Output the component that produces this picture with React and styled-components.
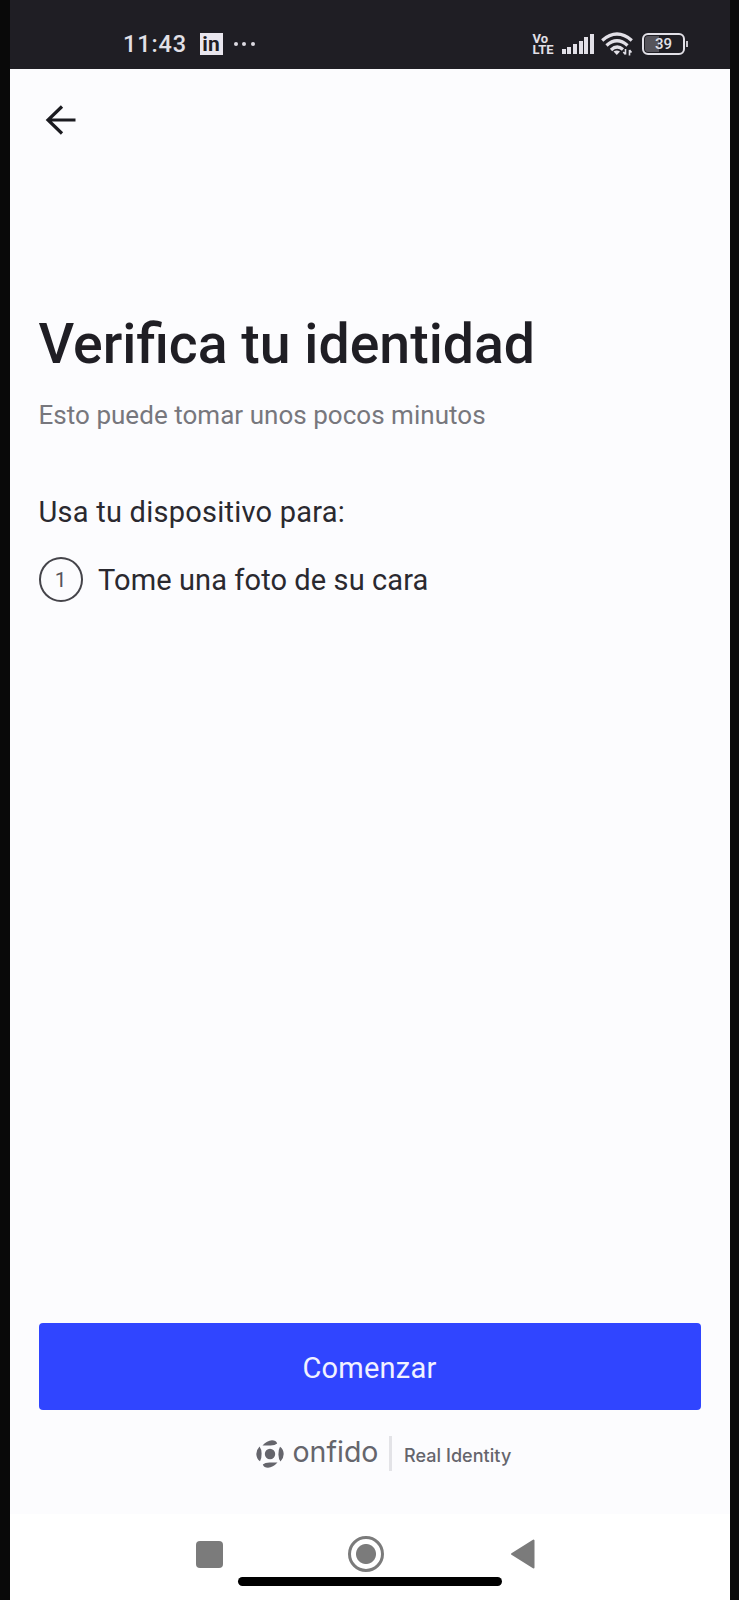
import React from "react";
import styled, { createGlobalStyle } from "styled-components";

const steps = ["Tome una foto de su cara"];

const signalBars = [5, 7, 10, 13.5, 17, 20];

const StatusBar = () => (
  <Status>
    <StatusLeft>
      <Clock>11:43</Clock>
      <LinkedIn>in</LinkedIn>
      <Dots>
        <span />
        <span />
        <span />
      </Dots>
    </StatusLeft>
    <StatusRight>
      <Volte>
        <span>Vo</span>
        <span>LTE</span>
      </Volte>
      <Signal>
        {signalBars.map((height) => (
          <SignalBar key={height} $height={height} />
        ))}
      </Signal>
      <WifiIcon viewBox="0 0 32 24">
        <g fill="none" stroke="#e2e0e7" strokeWidth="3.3">
          <path d="M1.2 8.4Q16-4.4 30.8 8.4" />
          <path d="M5.5 13.4Q16 4 26.5 13.4" />
          <path d="M10 18Q16 12.4 22 17.5" />
        </g>
        <path d="M12.5 19.6Q15.8 17.4 19 19.6L15.8 23z" fill="#e2e0e7" />
        <path
          d="M24.5 17v5.5M22.3 20l2.2 2.4M28.5 23.5v-5.5M28.5 18l2 2.4"
          fill="none"
          stroke="#e2e0e7"
          strokeWidth="1.6"
        />
      </WifiIcon>
      <Battery>
        <BatteryBody>39</BatteryBody>
        <BatteryTip />
      </Battery>
    </StatusRight>
  </Status>
);

const App = () => {
  return (
    <>
      <GlobalStyle />
      <Device>
        <Screen>
          <StatusBar />
          <Toolbar>
            <BackButton aria-label="Atrás">
              <svg width="32" height="30" viewBox="0 0 32 30">
                <path
                  d="M17 1.5 3 15l14 13.5M3 15h27.5"
                  fill="none"
                  stroke="#1b1b20"
                  strokeWidth="3.2"
                />
              </svg>
            </BackButton>
          </Toolbar>

          <Content>
            <Title>Verifica tu identidad</Title>
            <Subtitle>Esto puede tomar unos pocos minutos</Subtitle>
            <Lead>Usa tu dispositivo para:</Lead>
            <Steps>
              {steps.map((step, index) => (
                <Step key={step}>
                  <StepNumber>{index + 1}</StepNumber>
                  <StepText>{step}</StepText>
                </Step>
              ))}
            </Steps>
          </Content>

          <Footer>
            <StartButton>Comenzar</StartButton>
            <Brand>
              <svg width="28" height="28" viewBox="0 0 28 28" fill="#65656c">
                <circle cx="14" cy="14" r="5.2" />
                <path d="M6.5 5.5Q11 .5 16 .3q4 0 5.2 3.2Q19 5.6 14 5.5z" />
                <path d="M21.5 22.5Q17 27.5 12 27.7q-4 0-5.2-3.2Q9 22.4 14 22.5z" />
                <path d="M3.5 6.5Q.3 10 .3 14q.2 5 3.7 7.3Q5.800 18 5.600 13.500 5.500 9 3.500 6.500z" />
                <path d="M24.5 21.5q3.2-3.5 3.2-7.5-.2-5-3.7-7.3Q22.2 10 22.400 14.500q.1 4.500 2.100 7z" />
              </svg>
              <BrandName>onfido</BrandName>
              <Divider />
              <Tagline>Real Identity</Tagline>
            </Brand>
          </Footer>

          <NavBar>
            <NavSquare />
            <NavCircle />
            <svg width="25" height="30" viewBox="0 0 25 30">
              <path
                d="M2 15 23.5 1.5v27z"
                fill="#7b7b7b"
                stroke="#7b7b7b"
                strokeWidth="2"
                strokeLinejoin="round"
              />
            </svg>
            <HomeIndicator />
          </NavBar>
        </Screen>
      </Device>
    </>
  );
};

const GlobalStyle = createGlobalStyle`
  * {
    box-sizing: border-box;
  }

  body {
    margin: 0;
    background: #090909;
    font-family: Roboto, sans-serif;
  }

  svg {
    display: block;
    flex-shrink: 0;
  }
`;

const Device = styled.div`
  height: 1600px;
  padding: 0 9.5px;
  background: #090909;
`;

const Screen = styled.main`
  height: 100%;
  display: flex;
  flex-direction: column;
  background: #fcfcfe;
`;

const Status = styled.header`
  height: 69px;
  display: flex;
  justify-content: space-between;
  align-items: flex-start;
  padding: 32px 41.5px 0 113.5px;
  background: #1f1e24;
  color: #e2e0e7;
`;

const StatusLeft = styled.div`
  height: 24px;
  display: flex;
  align-items: center;
`;

const StatusRight = styled.div`
  height: 24px;
  display: flex;
  align-items: center;
`;

const Clock = styled.span`
  width: 76.5px;
  font-size: 23.5px;
  line-height: 24px;
  font-weight: 500;
  letter-spacing: 0.9px;
`;

const LinkedIn = styled.span`
  width: 23px;
  height: 22px;
  background: #e9e6ee;
  color: #1f1e24;
  font-size: 21px;
  line-height: 22px;
  font-weight: 700;
  text-align: center;
`;

const Dots = styled.span`
  display: flex;
  gap: 4.5px;
  margin-left: 11px;

  span {
    width: 4px;
    height: 4px;
    border-radius: 50%;
    background: #dddbe2;
  }
`;

const Volte = styled.div`
  width: 29px;
  display: flex;
  flex-direction: column;
  font-size: 13px;
  line-height: 11px;
  font-weight: 700;
`;

const Signal = styled.div`
  height: 20px;
  display: flex;
  align-items: flex-end;
  gap: 1.7px;
`;

const SignalBar = styled.span`
  width: 4px;
  height: ${({ $height }) => $height}px;
  background: #e2e0e7;
`;

const WifiIcon = styled.svg`
  width: 32px;
  height: 24px;
  margin: 0 9px 0 7px;
`;

const Battery = styled.div`
  display: flex;
  align-items: center;
  gap: 1px;
`;

const BatteryBody = styled.span`
  width: 43px;
  height: 22px;
  border: 2px solid #e2e0e7;
  border-radius: 6px;
  box-shadow: inset 0 0 0 1px #1f1e24;
  background: linear-gradient(to right, #56545b 39%, #1f1e24 39%);
  font-size: 15px;
  line-height: 19px;
  font-weight: 500;
  text-align: center;
`;

const BatteryTip = styled.span`
  width: 2px;
  height: 6px;
  background: #c9c7ce;
`;

const Toolbar = styled.div`
  height: 103px;
  padding: 36px 35px 0;
`;

const BackButton = styled.button`
  padding: 0;
  border: none;
  background: none;
  cursor: pointer;
`;

const Content = styled.section`
  flex: 1;
  padding: 138px 29px 0;
  color: #1f1e24;
`;

const Title = styled.h1`
  margin: 0;
  font-size: 55.4px;
  line-height: 70px;
  font-weight: 500;
  white-space: nowrap;
`;

const Subtitle = styled.p`
  margin: 17px 0 0;
  color: #77777d;
  font-size: 26px;
  line-height: 36px;
  letter-spacing: 0.03px;
`;

const Lead = styled.p`
  margin: 59px 0 0;
  color: #2a292f;
  font-size: 29px;
  line-height: 40px;
  letter-spacing: 0.24px;
`;

const Steps = styled.ol`
  margin: 25px 0 0;
  padding: 0;
  list-style: none;
`;

const Step = styled.li`
  display: flex;
  align-items: center;
  gap: 15px;
`;

const StepNumber = styled.span`
  width: 44.5px;
  height: 45px;
  display: flex;
  align-items: center;
  justify-content: center;
  border: 2px solid #45444a;
  border-radius: 50%;
  color: #55545a;
  font-size: 21px;
`;

const StepText = styled.span`
  color: #2a292f;
  font-size: 29px;
  line-height: 40px;
  letter-spacing: 0.1px;
`;

const Footer = styled.footer`
  height: 191px;
  padding: 0 29px;
`;

const StartButton = styled.button`
  display: block;
  width: 100%;
  height: 87px;
  padding: 2px 0 0;
  border: none;
  border-radius: 4px;
  background: #3045ff;
  color: #f1f1ff;
  font-family: inherit;
  font-size: 29px;
  letter-spacing: 0.25px;
  cursor: pointer;
`;

const Brand = styled.div`
  display: flex;
  align-items: center;
  margin-top: 26px;
  padding-left: 217px;
  color: #65656c;
`;

const BrandName = styled.span`
  width: 96px;
  margin-left: 9px;
  padding-bottom: 4px;
  font-family: Inter, sans-serif;
  font-size: 28.5px;
  line-height: 31px;
  font-variant-ligatures: none;
`;

const Divider = styled.span`
  width: 3px;
  height: 35px;
  background: #e3e3e7;
`;

const Tagline = styled.span`
  margin-left: 12.5px;
  padding-top: 3px;
  font-family: Inter, sans-serif;
  font-size: 18px;
  font-weight: 500;
  letter-spacing: 0.05px;
  white-space: nowrap;
`;

const NavBar = styled.nav`
  position: relative;
  height: 86px;
  display: flex;
  align-items: flex-start;
  padding: 22px 0 0 186.5px;
  background: #ffffff;

  svg {
    margin: 3px 0 0 126px;
  }
`;

const NavSquare = styled.span`
  width: 27px;
  height: 27px;
  margin-top: 5px;
  border-radius: 4px;
  background: #7b7b7b;
`;

const NavCircle = styled.span`
  width: 36px;
  height: 36px;
  margin-left: 125px;
  border: 3px solid #7b7b7b;
  border-radius: 50%;
  background: radial-gradient(circle, #7b7b7b 9.5px, #ffffff 10.5px);
`;

const HomeIndicator = styled.span`
  position: absolute;
  bottom: 14px;
  left: 228px;
  width: 264px;
  height: 9px;
  border-radius: 5px;
  background: #000000;
`;

export default App;
